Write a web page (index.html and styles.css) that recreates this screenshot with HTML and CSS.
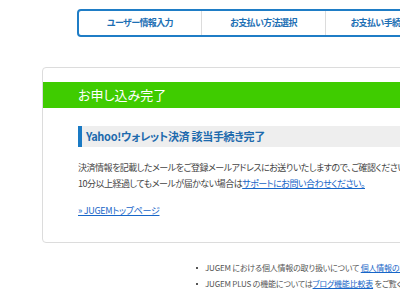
FILE: index.html
```html
<!DOCTYPE html>
<html>
<head>
    <title>お申し込み完了</title>
    <link rel="stylesheet" href="styles.css">
</head>
<body>

<ol class="steps">
    <li>ユーザー情報入力</li>
    <li>お支払い方法選択</li>
    <li>お支払い手続き完了</li>
</ol>

<div class="card">
    <h1 class="card-title">お申し込み完了</h1>
    <div class="card-body">
        <h2 class="sub-title">Yahoo!ウォレット決済 該当手続き完了</h2>
        <p class="message">
            決済情報を記載したメールをご登録メールアドレスにお送りいたしますので、ご確認ください。<br>
            10分以上経過してもメールが届かない場合は<a href="#">サポートにお問い合わせください。</a>
        </p>
        <a class="top-link" href="#">» JUGEMトップページ</a>
    </div>
</div>

<ul class="notes">
    <li>JUGEM における個人情報の取り扱いについて <a href="#">個人情報の利用目的</a></li>
    <li>JUGEM PLUS の機能については<a href="#">ブログ機能比較表</a> をご覧ください。</li>
</ul>

</body>
</html>
```

FILE: styles.css
```css
html {
    overflow: hidden;
}

body {
    margin: 0;
    width: 520px;
    font-family: "Noto Sans CJK JP", "DejaVu Sans", sans-serif;
    font-feature-settings: "palt";
    color: #444;
}

a {
    color: #1766c8;
    text-decoration: underline;
}

/* step navigation */
.steps {
    display: flex;
    list-style: none;
    margin: 9px 0 0 77px;
    padding: 0;
    width: 372px;
    border: 2px solid #1f7dc6;
    border-radius: 4px;
}

.steps li {
    width: 123px;
    height: 24px;
    line-height: 24px;
    text-align: center;
    font-size: 9px;
    letter-spacing: -0.6px;
    font-weight: bold;
    color: #1d6fb4;
    border-left: 1px solid #dcdcdc;
    white-space: nowrap;
}

.steps li:first-child {
    width: 122px;
    border-left: none;
}

/* completion card */
.card {
    margin: 30px 0 0 42px;
    padding: 14px 0 23px;
    width: 440px;
    border: 1px solid #dcdcdc;
    border-radius: 4px;
}

.card-title {
    margin: 0;
    padding-left: 35px;
    height: 26px;
    line-height: 26px;
    background-color: #3fcc00;
    color: #fff;
    font-size: 13px;
    font-weight: normal;
}

.card-body {
    padding: 18px 0 0 35px;
}

.sub-title {
    margin: 0;
    padding-left: 4px;
    height: 21px;
    line-height: 21px;
    border-left: 4px solid #1a7ac4;
    background-color: #eee;
    color: #1d6aad;
    font-size: 11px;
    letter-spacing: -0.3px;
    font-weight: bold;
    white-space: nowrap;
}

.message {
    margin: 13px 0 3px;
    font-size: 9px;
    letter-spacing: -0.5px;
    line-height: 16px;
    white-space: nowrap;
}

.top-link {
    font-size: 9px;
    letter-spacing: -0.3px;
    line-height: 16px;
}

/* footer notes */
.notes {
    list-style: none;
    margin: 17px 0 0 196px;
    padding: 0;
    font-size: 8px;
    letter-spacing: -0.2px;
    color: #555;
    white-space: nowrap;
}

.notes li {
    height: 16px;
    line-height: 16px;
}

.notes li::before {
    content: "";
    display: inline-block;
    width: 2px;
    height: 2px;
    margin: 0 7px 0 0;
    background-color: #555;
    vertical-align: 2px;
}
```
